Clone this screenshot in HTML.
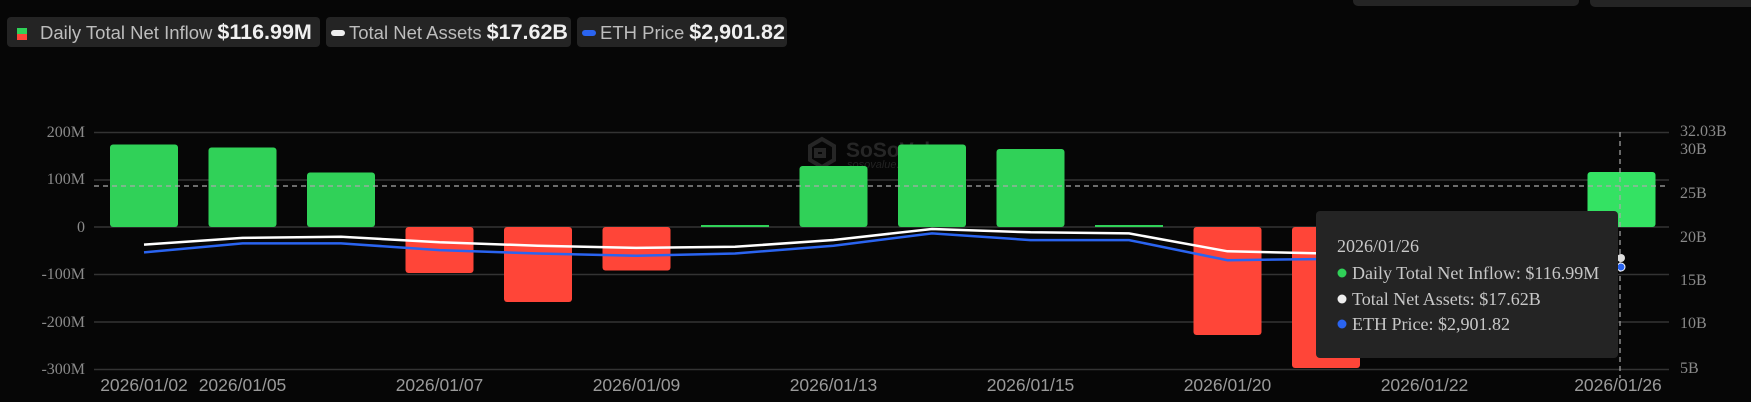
<!DOCTYPE html>
<html><head><meta charset="utf-8"><style>
html,body{margin:0;padding:0;background:#060606;width:1751px;height:402px;overflow:hidden;font-family:"Liberation Sans",sans-serif}
.pill{position:absolute;top:17px;height:30px;background:#242424;border-radius:4px;color:#bdbdbd;font-size:18.5px;line-height:30px;white-space:nowrap;box-sizing:border-box;padding-left:10px;overflow:hidden}
.pill b{color:#f0f0f0;font-size:21.5px;margin-left:5px}
</style></head><body>
<div class="pill" style="left:7px;width:313px"><span style="display:inline-block;width:10px;height:12px;vertical-align:-1px;margin-right:13px;background:linear-gradient(#30d158 50%,#ff4538 50%)"></span>Daily Total Net Inflow<b>$116.99M</b></div>
<div class="pill" style="left:326px;width:245px;padding-left:5px"><span style="display:inline-block;width:14px;height:6px;border-radius:3px;background:#eee;vertical-align:3px;margin-right:4px"></span>Total Net Assets<b>$17.62B</b></div>
<div class="pill" style="left:577px;width:210px;padding-left:5px"><span style="display:inline-block;width:14px;height:6px;border-radius:3px;background:#2a64f0;vertical-align:3px;margin-right:4px"></span>ETH Price<b>$2,901.82</b></div>
<div style="position:absolute;left:1353px;top:-6px;width:226px;height:12px;background:#242424;border-radius:5px"></div>
<div style="position:absolute;left:1590px;top:-6px;width:170px;height:13px;background:#242424;border-radius:5px"></div>
<svg width="1751" height="402" style="position:absolute;left:0;top:0">
<g stroke="#333" stroke-width="1.5">
<line x1="94" x2="1669" y1="132.5" y2="132.5"/><line x1="94" x2="1669" y1="180" y2="180"/><line x1="94" x2="1669" y1="227" y2="227"/><line x1="94" x2="1669" y1="274.5" y2="274.5"/><line x1="94" x2="1669" y1="322" y2="322"/><line x1="94" x2="1669" y1="369.5" y2="369.5"/>
</g>
<g font-family="Liberation Serif,serif" font-size="16" fill="#8a8a8a" text-anchor="end">
<text x="85" y="137">200M</text><text x="85" y="184">100M</text><text x="85" y="232">0</text><text x="85" y="279">-100M</text><text x="85" y="327">-200M</text><text x="85" y="374">-300M</text>
</g>
<g font-family="Liberation Serif,serif" font-size="16" fill="#8a8a8a">
<text x="1680" y="136">32.03B</text><text x="1680" y="154">30B</text><text x="1680" y="198">25B</text><text x="1680" y="242">20B</text><text x="1680" y="285">15B</text><text x="1680" y="328">10B</text><text x="1680" y="373">5B</text>
</g>
<g opacity="0.9">
<path d="M822 139 l12 7 v14 l-12 7 l-12 -7 v-14z M816 150 h8 v6 h-8z" fill="none" stroke="#2a2a2a" stroke-width="4"/>
<text x="846" y="157" font-size="21" font-weight="bold" fill="#2a2a2a">SoSoValue</text>
<text x="847" y="168" font-size="11" font-style="italic" fill="#262626">sosovalue.com</text>
</g>
<g fill="#30d158">
<rect x="110" y="144.5" width="68" height="82.5" rx="3"/>
<rect x="208.5" y="147.5" width="68" height="79.5" rx="3"/>
<rect x="307" y="172.5" width="68" height="54.5" rx="3"/>
<rect x="701" y="225" width="68" height="2"/>
<rect x="799.5" y="166" width="68" height="61" rx="3"/>
<rect x="898" y="144.5" width="68" height="82.5" rx="3"/>
<rect x="996.5" y="149" width="68" height="78" rx="3"/>
<rect x="1095" y="225" width="68" height="2"/>
<rect x="1587.5" y="172" width="68" height="55" rx="3" fill="#34e263"/>
</g>
<g fill="#ff4538">
<rect x="405.5" y="227" width="68" height="46" rx="3"/>
<rect x="504" y="227" width="68" height="75" rx="3"/>
<rect x="602.5" y="227" width="68" height="43.5" rx="3"/>
<rect x="1193.5" y="227" width="68" height="108" rx="3"/>
<rect x="1292" y="227" width="68" height="141" rx="3"/>
</g>
<line x1="94" x2="1669" y1="186" y2="186" stroke="#aaa" stroke-width="1.2" stroke-dasharray="5,4"/>
<line x1="1620" x2="1620" y1="132" y2="378" stroke="#aaa" stroke-width="1.2" stroke-dasharray="5,4"/>
<polyline fill="none" stroke="#fff" stroke-width="2.5" points="144,244.6 242.5,237.9 341,236.7 439.5,242.3 538,245.7 636.5,247.9 735,246.8 833.5,240 932,229 1030.5,232.3 1129,233.4 1227.5,251.3 1326,253.5 1424.5,254 1523,256 1621,258"/>
<polyline fill="none" stroke="#2a64f0" stroke-width="2.5" points="144,252.4 242.5,243.4 341,243.4 439.5,250.1 538,253.5 636.5,255.7 735,253.5 833.5,245.7 932,233.4 1030.5,240.1 1129,240.1 1227.5,260.2 1326,259 1424.5,258 1523,262 1621,267"/>
<circle cx="1621" cy="258" r="4" fill="#ddd"/>
<circle cx="1621" cy="267" r="4" fill="#2a64f0" stroke="#fff" stroke-width="1"/>
<g font-size="17.5" fill="#9a9a9a" text-anchor="middle">
<text x="144" y="391">2026/01/02</text><text x="242.5" y="391">2026/01/05</text><text x="439.5" y="391">2026/01/07</text><text x="636.5" y="391">2026/01/09</text><text x="833.5" y="391">2026/01/13</text><text x="1030.5" y="391">2026/01/15</text><text x="1227.5" y="391">2026/01/20</text><text x="1424.5" y="391">2026/01/22</text><text x="1618" y="391">2026/01/26</text>
</g>
<rect x="1316" y="211" width="302" height="147" rx="4" fill="#242424"/>
<g font-family="Liberation Serif,serif" font-size="18" fill="#c8c8c8">
<text x="1337" y="252">2026/01/26</text>
<circle cx="1342" cy="273" r="4.5" fill="#30d158"/><text x="1352" y="279">Daily Total Net Inflow: $116.99M</text>
<circle cx="1342" cy="299" r="4.5" fill="#eee"/><text x="1352" y="305">Total Net Assets: $17.62B</text>
<circle cx="1342" cy="324" r="4.5" fill="#2a64f0"/><text x="1352" y="330">ETH Price: $2,901.82</text>
</g>
</svg>
</body></html>
